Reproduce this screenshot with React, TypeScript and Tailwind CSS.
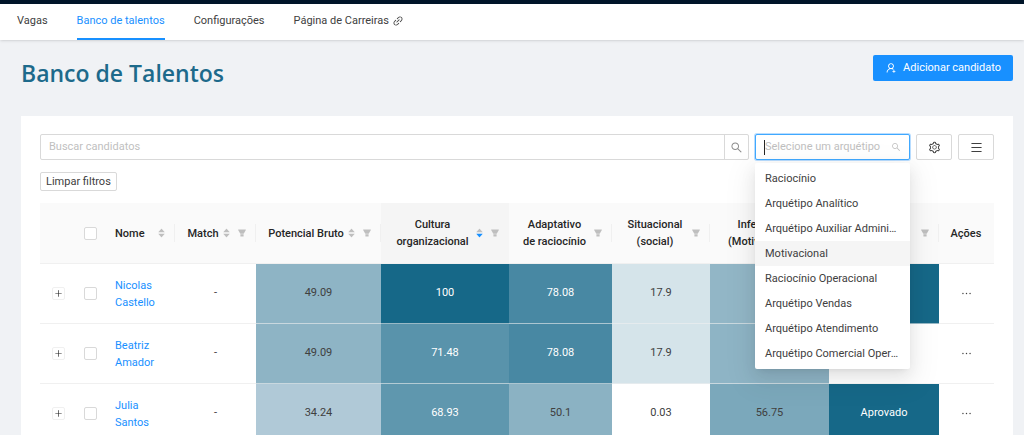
import React, { useState } from 'react';
import {
  AiFillCaretDown,
  AiFillCaretUp,
  AiFillFilter,
  AiOutlineEllipsis,
  AiOutlineLink,
  AiOutlineMenu,
  AiOutlinePlus,
  AiOutlineSearch,
  AiOutlineSetting,
  AiOutlineUserAdd,
} from 'react-icons/ai';
import clsx from 'clsx';

interface Score {
  value: string;
  className: string;
}

interface Candidate {
  name: string;
  match: string;
  scores: Score[];
}

interface Column {
  title: string;
  width: string;
  sort?: 'none' | 'desc';
  filter?: boolean;
  left?: boolean;
}

const tabs = ['Vagas', 'Banco de talentos', 'Configurações'];

const archetypes = [
  'Raciocínio',
  'Arquétipo Analítico',
  'Arquétipo Auxiliar Administrativo',
  'Motivacional',
  'Raciocínio Operacional',
  'Arquétipo Vendas',
  'Arquétipo Atendimento',
  'Arquétipo Comercial Operacional',
];

const columns: Column[] = [
  { title: 'Nome', width: 'w-[71px]', sort: 'none', left: true },
  { title: 'Match', width: 'w-[81px]', sort: 'none', filter: true },
  { title: 'Potencial Bruto', width: 'w-[125px]', sort: 'none', filter: true },
  { title: 'Cultura organizacional', width: 'w-[128px]', sort: 'desc', filter: true },
  { title: 'Adaptativo de raciocínio', width: 'w-[103px]', filter: true },
  { title: 'Situacional (social)', width: 'w-[98px]', filter: true },
  { title: 'Inferencial (Motivacional)', width: 'w-[119px]', filter: true },
  { title: 'Status', width: 'w-[110px]', filter: true },
  { title: 'Ações', width: 'w-[55px]' },
];

const candidates: Candidate[] = [
  {
    name: 'Nicolas Castello',
    match: '-',
    scores: [
      { value: '49.09', className: 'bg-[#8eb4c5]' },
      { value: '100', className: 'bg-[#166888] text-white' },
      { value: '78.08', className: 'bg-[#4888a3] text-white' },
      { value: '17.9', className: 'bg-[#d5e4ea]' },
      { value: '47.1', className: 'bg-[#92b6c6]' },
      { value: 'Aprovado', className: 'bg-[#166888] text-white' },
    ],
  },
  {
    name: 'Beatriz Amador',
    match: '-',
    scores: [
      { value: '49.09', className: 'bg-[#8eb4c5]' },
      { value: '71.48', className: 'bg-[#5993ab] text-white' },
      { value: '78.08', className: 'bg-[#4888a3] text-white' },
      { value: '17.9', className: 'bg-[#d5e4ea]' },
      { value: '47.1', className: 'bg-[#8eb4c5]' },
      { value: '-', className: 'bg-white' },
    ],
  },
  {
    name: 'Julia Santos',
    match: '-',
    scores: [
      { value: '34.24', className: 'bg-[#b0c9d7]' },
      { value: '68.93', className: 'bg-[#5f97ae] text-white' },
      { value: '50.1', className: 'bg-[#8bb2c3]' },
      { value: '0.03', className: 'bg-white' },
      { value: '56.75', className: 'bg-[#7ba8bb]' },
      { value: 'Aprovado', className: 'bg-[#166888] text-white' },
    ],
  },
];

const Checkbox: React.FC<{ label: string }> = ({ label }) => (
  <input
    type="checkbox"
    aria-label={label}
    className="block size-[13px] appearance-none rounded-xs border border-[#d9d9d9] bg-white checked:bg-[#1890ff]"
  />
);

const SortButton: React.FC<{ title: string; sort: 'none' | 'desc' }> = ({ title, sort }) => (
  <button
    type="button"
    aria-label={`Ordenar ${title}`}
    className="flex shrink-0 flex-col items-center text-[#bfbfbf]"
  >
    <AiFillCaretUp className="-mb-1 size-[9px]" />
    <AiFillCaretDown className={clsx('size-[9px]', sort === 'desc' && 'text-[#1890ff]')} />
  </button>
);

const HeaderCell: React.FC<{ column: Column; last: boolean }> = ({ column, last }) => (
  <th
    scope="col"
    className={clsx(
      'h-[61px] border-b border-[#f0f0f0] p-0 font-medium text-[#262626]',
      column.sort === 'desc' ? 'bg-[#f5f5f5]' : 'bg-[#fafafa]'
    )}
  >
    <div
      className={clsx(
        'flex h-[18px] items-center gap-[6px]',
        column.filter && !column.sort ? 'pl-[13px]' : 'pl-[11px]',
        last ? 'pr-3' : 'border-r pr-2',
        column.sort === 'desc' ? 'border-transparent' : 'border-[#f0f0f0]'
      )}
    >
      <div className="flex min-w-0 flex-1 items-center gap-[2px]">
        <span className={clsx('min-w-0 flex-1 leading-[17px]', column.left ? 'text-left' : 'text-center')}>
          {column.title}
        </span>
        {column.sort && <SortButton title={column.title} sort={column.sort} />}
      </div>
      {column.filter && (
        <button type="button" aria-label={`Filtrar ${column.title}`} className="shrink-0 text-[#bfbfbf]">
          <AiFillFilter className="size-[10px]" />
        </button>
      )}
    </div>
  </th>
);

const CandidateRow: React.FC<Candidate> = ({ name, match, scores }) => (
  <tr className="h-[60px]">
    <td className="border-b border-[#f0f0f0] p-0">
      <button
        type="button"
        aria-label={`Expandir ${name}`}
        className="mx-auto flex size-[13px] items-center justify-center rounded-xs border border-[#f0f0f0] text-[#262626]"
      >
        <AiOutlinePlus className="size-[9px]" />
      </button>
    </td>
    <td className="border-b border-[#f0f0f0] p-0 pl-2">
      <Checkbox label={`Selecionar ${name}`} />
    </td>
    <td className="border-b border-[#f0f0f0] px-[11px] py-0 leading-[17px]">
      <a href="#" className="block w-min text-[#1890ff]">
        {name}
      </a>
    </td>
    <td className="border-b border-[#f0f0f0] p-0 text-center">{match}</td>
    {scores.map((score, index) => (
      <td
        key={index}
        className={clsx('border-b border-[#f0f0f0]/60 p-0 text-center', score.className)}
      >
        {score.value}
      </td>
    ))}
    <td className="border-b border-[#f0f0f0] p-0">
      <button type="button" aria-label={`Ações de ${name}`} className="mx-auto block">
        <AiOutlineEllipsis className="size-[13px]" />
      </button>
    </td>
  </tr>
);

const ArchetypeSelect: React.FC = () => {
  const [active, setActive] = useState('Motivacional');

  return (
    <div className="relative w-[155px]">
      <div className="flex h-[26px] items-center rounded-xs border border-[#40a9ff] bg-white px-2 ring-1 ring-[#1890ff]/30">
        <span className="h-[15px] w-px shrink-0 bg-[#262626]" />
        <input
          type="text"
          role="combobox"
          aria-label="Selecione um arquétipo"
          aria-expanded="true"
          aria-controls="archetypes"
          placeholder="Selecione um arquétipo"
          className="min-w-0 flex-1 outline-none placeholder:text-[#bfbfbf]"
        />
        <AiOutlineSearch className="size-[10px] shrink-0 text-[#bfbfbf]" />
      </div>
      <ul
        id="archetypes"
        role="listbox"
        className="absolute top-full left-0 z-10 mt-[3px] w-full rounded-xs bg-white py-[3px] shadow-[0_3px_6px_-4px_rgba(0,0,0,0.12),0_6px_16px_rgba(0,0,0,0.08),0_9px_28px_8px_rgba(0,0,0,0.05)]"
      >
        {archetypes.map((archetype) => (
          <li
            key={archetype}
            role="option"
            aria-selected={archetype === active}
            onMouseEnter={() => setActive(archetype)}
            className={clsx(
              'h-[25px] cursor-pointer truncate px-[10px] leading-[25px]',
              archetype === active && 'bg-[#f5f5f5]'
            )}
          >
            {archetype}
          </li>
        ))}
      </ul>
    </div>
  );
};

const App: React.FC = () => {
  const [tab, setTab] = useState('Banco de talentos');

  return (
    <div className="min-h-screen bg-[#f0f2f5] font-['Roboto','Open_Sans',sans-serif] text-[11px] text-[#404040]">
      <header className="relative border-t-4 border-[#001529] bg-white shadow-sm">
        <nav className="flex h-9 gap-[29px] px-[17px]">
          {tabs.map((item) => (
            <a
              key={item}
              href="#"
              onClick={() => setTab(item)}
              className={clsx(
                'flex items-center border-b-2',
                item === tab ? 'border-[#1890ff] text-[#1890ff]' : 'border-transparent'
              )}
            >
              {item}
            </a>
          ))}
          <a href="#" className="flex items-center gap-[3px] border-b-2 border-transparent">
            Página de Carreiras
            <AiOutlineLink className="size-3" />
          </a>
        </nav>
      </header>

      <main className="pr-[11px] pl-[21px]">
        <div className="flex h-[76px] items-start justify-between pt-[15px]">
          <h1 className="font-['Open_Sans','Noto_Sans',sans-serif] text-[23px] leading-9 font-semibold text-[#1d6a8b]">
            Banco de Talentos
          </h1>
          <button
            type="button"
            className="flex h-[26px] items-center gap-[6px] rounded-xs bg-[#1890ff] px-3 text-white"
          >
            <AiOutlineUserAdd className="size-3" />
            Adicionar candidato
          </button>
        </div>

        <section className="bg-white px-[19px] pt-[18px] pb-5">
          <div className="flex gap-[6px]">
            <div className="flex h-[26px] flex-1 rounded-xs border border-[#d9d9d9]">
              <input
                type="text"
                aria-label="Buscar candidatos"
                placeholder="Buscar candidatos"
                className="min-w-0 flex-1 px-2 outline-none placeholder:text-[#bfbfbf]"
              />
              <button
                type="button"
                aria-label="Buscar"
                className="flex w-6 items-center justify-center border-l border-[#d9d9d9] text-[#8c8c8c]"
              >
                <AiOutlineSearch className="size-[13px]" />
              </button>
            </div>
            <ArchetypeSelect />
            <button
              type="button"
              aria-label="Configurar"
              className="flex h-[26px] w-9 items-center justify-center rounded-xs border border-[#d9d9d9]"
            >
              <AiOutlineSetting className="size-[13px]" />
            </button>
            <button
              type="button"
              aria-label="Menu"
              className="flex h-[26px] w-9 items-center justify-center rounded-xs border border-[#d9d9d9]"
            >
              <AiOutlineMenu className="size-[13px]" />
            </button>
          </div>

          <button type="button" className="mt-3 block h-[19px] rounded-xs border border-[#d9d9d9] px-[5px] leading-[16px]">
            Limpar filtros
          </button>

          <table className="mt-3 w-full table-fixed border-separate border-spacing-0">
            <colgroup>
              <col className="w-9" />
              <col className="w-7" />
              {columns.map((column) => (
                <col key={column.title} className={column.width} />
              ))}
            </colgroup>
            <thead>
              <tr>
                <th className="border-b border-[#f0f0f0] bg-[#fafafa] p-0" />
                <th className="border-b border-[#f0f0f0] bg-[#fafafa] p-0 pl-2">
                  <Checkbox label="Selecionar todos" />
                </th>
                {columns.map((column, index) => (
                  <HeaderCell
                    key={column.title}
                    column={column}
                    last={index === columns.length - 1}
                  />
                ))}
              </tr>
            </thead>
            <tbody>
              {candidates.map((candidate) => (
                <CandidateRow key={candidate.name} {...candidate} />
              ))}
            </tbody>
          </table>
        </section>
      </main>
    </div>
  );
};

export default App;
